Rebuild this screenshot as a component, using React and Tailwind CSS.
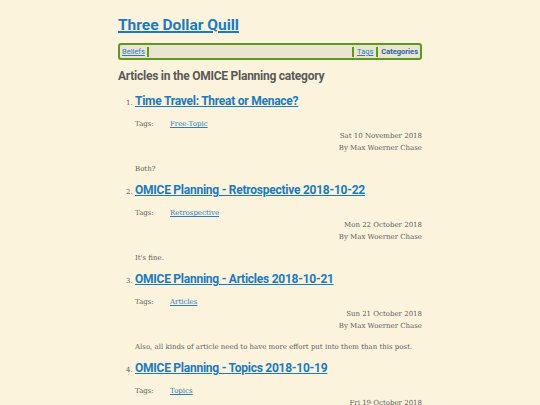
const posts = [
  {
    title: 'Time Travel: Threat or Menace?',
    tag: 'Free-Topic',
    date: 'Sat 10 November 2018',
    summary: 'Both?',
  },
  {
    title: 'OMICE Planning - Retrospective 2018-10-22',
    tag: 'Retrospective',
    date: 'Mon 22 October 2018',
    summary: "It's fine.",
  },
  {
    title: 'OMICE Planning - Articles 2018-10-21',
    tag: 'Articles',
    date: 'Sun 21 October 2018',
    summary: 'Also, all kinds of article need to have more effort put into them than this post.',
  },
  {
    title: 'OMICE Planning - Topics 2018-10-19',
    tag: 'Topics',
    date: 'Fri 19 October 2018',
    summary: 'Topics.',
  },
];

const sans = "font-['Roboto',sans-serif]";

const App = () => {
  return (
    <div className="min-h-screen bg-[#fcf3dc] font-['DejaVu_Serif',serif] text-[#5e5e5e]">
      <div className="mx-auto w-[304px] pt-[12px]">
        <h1 className={`${sans} text-[15.5px] font-bold leading-[26px]`}>
          <a href="#" className="text-[#1a7ac4] underline decoration-2">Three Dollar Quill</a>
        </h1>

        {/* Nav bar */}
        <nav className={`${sans} mt-[5px] flex h-[17px] items-center rounded-[3px] border-2 border-[#5b9a1c] bg-[#ebe4d0] px-[2px] text-[7.5px] leading-none`}>
          <a href="#" className="text-[#2a7bc0] underline">Beliefs</a>
          <span className="ml-[2px] h-[10px] w-[2px] bg-[#5b9a1c]" />
          <div className="flex-1" />
          <span className="mr-[3px] h-[10px] w-[2px] bg-[#5b9a1c]" />
          <a href="#" className="text-[#2a7bc0] underline">Tags</a>
          <span className="mx-[3px] h-[10px] w-[2px] bg-[#5b9a1c]" />
          <span className="font-bold text-[#1f66a8]">Categories</span>
        </nav>

        <h2 className={`${sans} mt-[8px] text-[12px] font-bold leading-[16px] tracking-[-0.25px] text-[#5a5a5a]`}>
          Articles in the OMICE Planning category
        </h2>

        <ol className="mt-[9px] list-decimal pl-[17px] marker:text-[7px]">
          {posts.map((p) => (
            <li key={p.title} className="mb-[8px]">
              <h3 className={`${sans} text-[12px] font-bold leading-[16px] tracking-[-0.25px]`}>
                <a href="#" className="text-[#1a7ac4] underline">{p.title}</a>
              </h3>
              <div className="mt-[10px] flex text-[7px] leading-[10px]">
                <span className="w-[35px]">Tags:</span>
                <a href="#" className="text-[#2a7bc0] underline">{p.tag}</a>
              </div>
              <div className="mt-[1px] text-right text-[7px] leading-[12px]">
                <div>{p.date}</div>
                <div>By Max Woerner Chase</div>
              </div>
              <p className="mt-[10px] text-[7px] leading-[10px]">{p.summary}</p>
            </li>
          ))}
        </ol>
      </div>
    </div>
  );
};

export default App;
